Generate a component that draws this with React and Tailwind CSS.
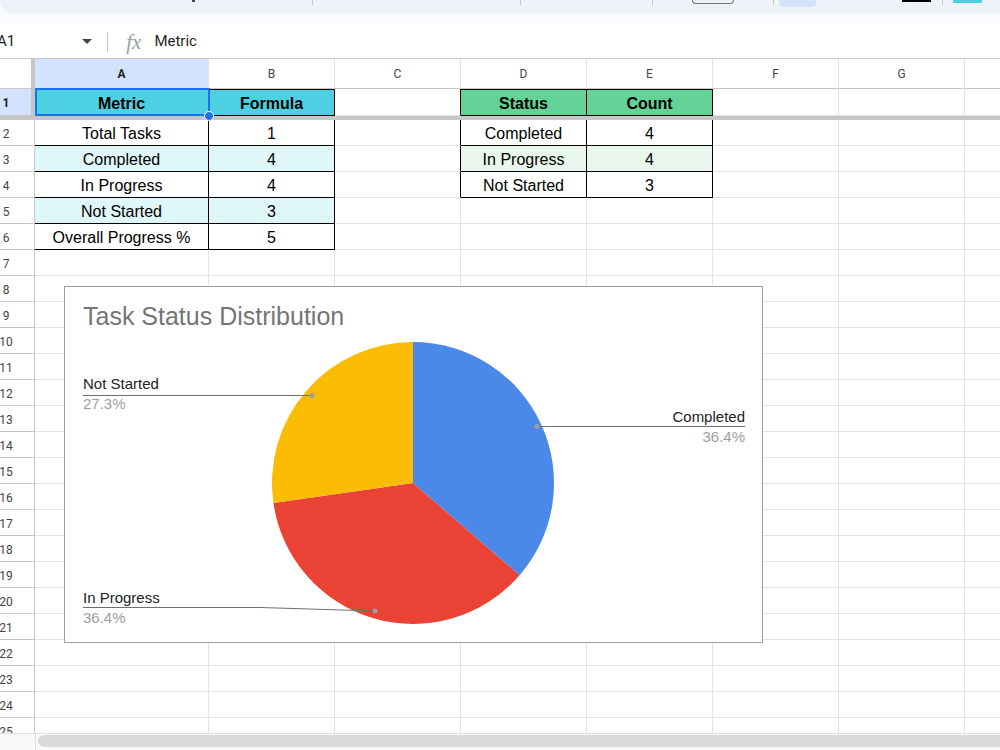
import React from 'react';
import clsx from 'clsx';

const COLS = ['A', 'B', 'C', 'D', 'E', 'F', 'G', ''];
const COL_W = ['w-[174px]', 'w-[126px]', 'w-[126px]', 'w-[126px]', 'w-[126px]', 'w-[126px]', 'w-[126px]', 'w-[100px]'];

const CYAN = 'bg-[#4dd0e1]';
const CYAN_LT = 'bg-[#e0f7fa]';
const GREEN = 'bg-[#63d297]';
const GREEN_LT = 'bg-[#e8f6ed]';

// cell data keyed by row number, then column index
const cells = {
  1: { 0: { t: 'Metric', bold: true, bg: CYAN }, 1: { t: 'Formula', bold: true, bg: CYAN }, 3: { t: 'Status', bold: true, bg: GREEN }, 4: { t: 'Count', bold: true, bg: GREEN } },
  2: { 0: { t: 'Total Tasks' }, 1: { t: '1' }, 3: { t: 'Completed' }, 4: { t: '4' } },
  3: { 0: { t: 'Completed', bg: CYAN_LT }, 1: { t: '4', bg: CYAN_LT }, 3: { t: 'In Progress', bg: GREEN_LT }, 4: { t: '4', bg: GREEN_LT } },
  4: { 0: { t: 'In Progress' }, 1: { t: '4' }, 3: { t: 'Not Started' }, 4: { t: '3' } },
  5: { 0: { t: 'Not Started', bg: CYAN_LT }, 1: { t: '3', bg: CYAN_LT } },
  6: { 0: { t: 'Overall Progress %' }, 1: { t: '5' } },
};

const inTable = (r, c) => (r <= 6 && (c === 0 || c === 1)) || (r <= 4 && (c === 3 || c === 4));

function Cell({ r, c }) {
  const d = cells[r]?.[c];
  const table = inTable(r, c);
  const rightBlack = table || (r <= 4 && c === 2);
  return (
    <div
      className={clsx(
        'shrink-0 h-full flex items-end justify-center pb-[3px] border-r border-b border-[#e2e3e3] text-[16px] leading-[16px] text-black',
        COL_W[c],
        d?.bg ?? 'bg-white',
        rightBlack && 'border-r-black',
        table && 'border-b-black',
        table && r === 1 && 'shadow-[inset_0_1px_0_#000]',
        d?.bold && 'font-bold'
      )}
    >
      {d?.t}
    </div>
  );
}

function RowHead({ n, active }) {
  return (
    <div
      className={clsx(
        'shrink-0 w-[35px] h-full flex items-center pt-[2px] border-r border-b border-[#c7c7c7] text-[12px] font-["Roboto",sans-serif]',
        active ? 'bg-[#d3e3fd] font-bold text-[#1f1f1f] border-r-4 border-r-[#c4c7c5]' : 'bg-white text-[#444]'
      )}
    >
      <div className="w-[12px] flex justify-center">{n}</div>
    </div>
  );
}

function Toolbar() {
  return (
    <div className="h-[23px] bg-[#f8fafd]">
      <div className="h-[13px] bg-[#eef2f9] rounded-bl-[14px] flex items-start">
        <div className="ml-[192px] w-[3px] h-[2px] bg-[#444]" />
        <div className="ml-[117px] w-px h-[5px] bg-[#c7c7c7]" />
        <div className="ml-[207px] w-px h-[5px] bg-[#c7c7c7]" />
        <div className="ml-[131px] w-px h-[5px] bg-[#c7c7c7]" />
        <div className="ml-[39px] w-[42px] h-[4px] border border-t-0 border-[#747775] rounded-b-[4px]" />
        <div className="ml-[39px] w-px h-[5px] bg-[#c7c7c7]" />
        <div className="ml-[5px] w-[37px] h-[7px] bg-[#d3e3fd] rounded-b-[4px]" />
        <div className="ml-[86px] w-[29px] h-[2px] bg-black" />
        <div className="ml-[11px] w-px h-[5px] bg-[#c7c7c7]" />
        <div className="ml-[10px] w-[29px] h-[3px] bg-[#4dd0e1]" />
      </div>
    </div>
  );
}

function FormulaBar() {
  return (
    <div className="h-[36px] flex items-center pt-[2px] bg-white border-b border-[#c7c7c7] font-['Roboto',sans-serif]">
      <span className="-ml-[3px] text-[15px] text-[#1f1f1f]">A1</span>
      <svg className="ml-[67px] w-[10px] h-[5px]" viewBox="0 0 10 5">
        <path d="M0 0h10L5 5z" fill="#444" />
      </svg>
      <div className="ml-[15px] w-px h-[20px] bg-[#c7c7c7]" />
      <span className="ml-[18px] text-[21px] leading-[20px] italic text-[#9aa0a6] font-['Liberation_Serif',serif]">fx</span>
      <span className="ml-[13px] text-[15px] text-[#1f1f1f]">Metric</span>
    </div>
  );
}

function Chart() {
  // pie centre (348,196), r 141; slices 4/11, 4/11, 3/11 clockwise from top
  return (
    <div className="absolute left-[64px] top-[227px] w-[699px] h-[357px] border border-[#9e9e9e] bg-white font-['Liberation_Sans',Arial,sans-serif]">
      <div className="absolute left-[18px] top-[17px] text-[25px] leading-[25px] text-[#757575]">Task Status Distribution</div>
      <svg className="absolute left-0 top-0" width="697" height="355" viewBox="0 0 697 355">
        <path d="M348 196 L348 55 A141 141 0 0 1 454.55 288.34 Z" fill="#4a89e8" />
        <path d="M348 196 L454.55 288.34 A141 141 0 0 1 208.44 216.06 Z" fill="#ea4335" />
        <path d="M348 196 L208.44 216.06 A141 141 0 0 1 348 55 Z" fill="#fbbc04" />
        <path d="M18 108.5 H247" stroke="#6f6f6f" strokeWidth="1" fill="none" />
        <path d="M472 139.5 H680" stroke="#6f6f6f" strokeWidth="1" fill="none" />
        <path d="M18 320.5 H195 L310 324" stroke="#6f6f6f" strokeWidth="1" fill="none" />
        <circle cx="247" cy="108.5" r="2.5" fill="#9e9e9e" />
        <circle cx="472" cy="139.5" r="2.5" fill="#9e9e9e" />
        <circle cx="310" cy="324" r="2.5" fill="#9e9e9e" />
      </svg>
      <div className="absolute left-[18px] top-[87px] text-[15px] leading-[20px]">
        <div className="text-[#222]">Not Started</div>
        <div className="text-[#9e9e9e]">27.3%</div>
      </div>
      <div className="absolute right-[17px] top-[120px] text-[15px] leading-[20px] text-right">
        <div className="text-[#222]">Completed</div>
        <div className="text-[#9e9e9e]">36.4%</div>
      </div>
      <div className="absolute left-[18px] top-[301px] text-[15px] leading-[20px]">
        <div className="text-[#222]">In Progress</div>
        <div className="text-[#9e9e9e]">36.4%</div>
      </div>
    </div>
  );
}

export default function App() {
  const rows = Array.from({ length: 24 }, (_, i) => i + 2);
  return (
    <div className="w-[1000px] h-[750px] overflow-hidden bg-white font-['Liberation_Sans',Arial,sans-serif]">
      <Toolbar />
      <FormulaBar />
      <div className="relative h-[674px] overflow-hidden">
        {/* column headers */}
        <div className="flex h-[30px] font-['Roboto',sans-serif] text-[12px]">
          <div className="shrink-0 w-[35px] h-full bg-white border-r-4 border-b border-r-[#c4c7c5] border-b-[#c7c7c7]" />
          {COLS.map((l, c) => (
            <div
              key={c}
              className={clsx(
                'shrink-0 h-full flex items-center justify-center border-r border-b border-[#e2e3e3] border-b-[#c7c7c7]',
                COL_W[c],
                c === 0 ? 'bg-[#d3e3fd] font-bold text-[#1f1f1f]' : 'bg-white text-[#444]'
              )}
            >
              {l}
            </div>
          ))}
        </div>
        {/* frozen row 1 */}
        <div className="flex h-[27px]">
          <RowHead n={1} active />
          {COLS.map((l, c) => <Cell key={c} r={1} c={c} />)}
        </div>
        <div className="h-[4px] bg-[#c4c7c5]" />
        {rows.map((r) => (
          <div key={r} className="flex h-[26px]">
            <RowHead n={r} />
            {COLS.map((l, c) => <Cell key={c} r={r} c={c} />)}
          </div>
        ))}
        {/* selection on A1 */}
        <div className="absolute left-[35px] top-[29px] w-[175px] h-[28px] border-2 border-[#1a73e8] pointer-events-none" />
        <div className="absolute left-[204px] top-[52px] w-[10px] h-[10px] rounded-full bg-[#1a73e8] border-[1.5px] border-white" />
        <Chart />
      </div>
      {/* horizontal scrollbar */}
      <div className="h-[17px] flex bg-[#f8f9fa] border-t border-[#e0e0e0]">
        <div className="w-[36px] shrink-0 border-r border-[#e0e0e0]" />
        <div className="flex-1 ml-[2px] mt-[1px] h-[12px] bg-[#dadada] rounded-l-full" />
      </div>
    </div>
  );
}
